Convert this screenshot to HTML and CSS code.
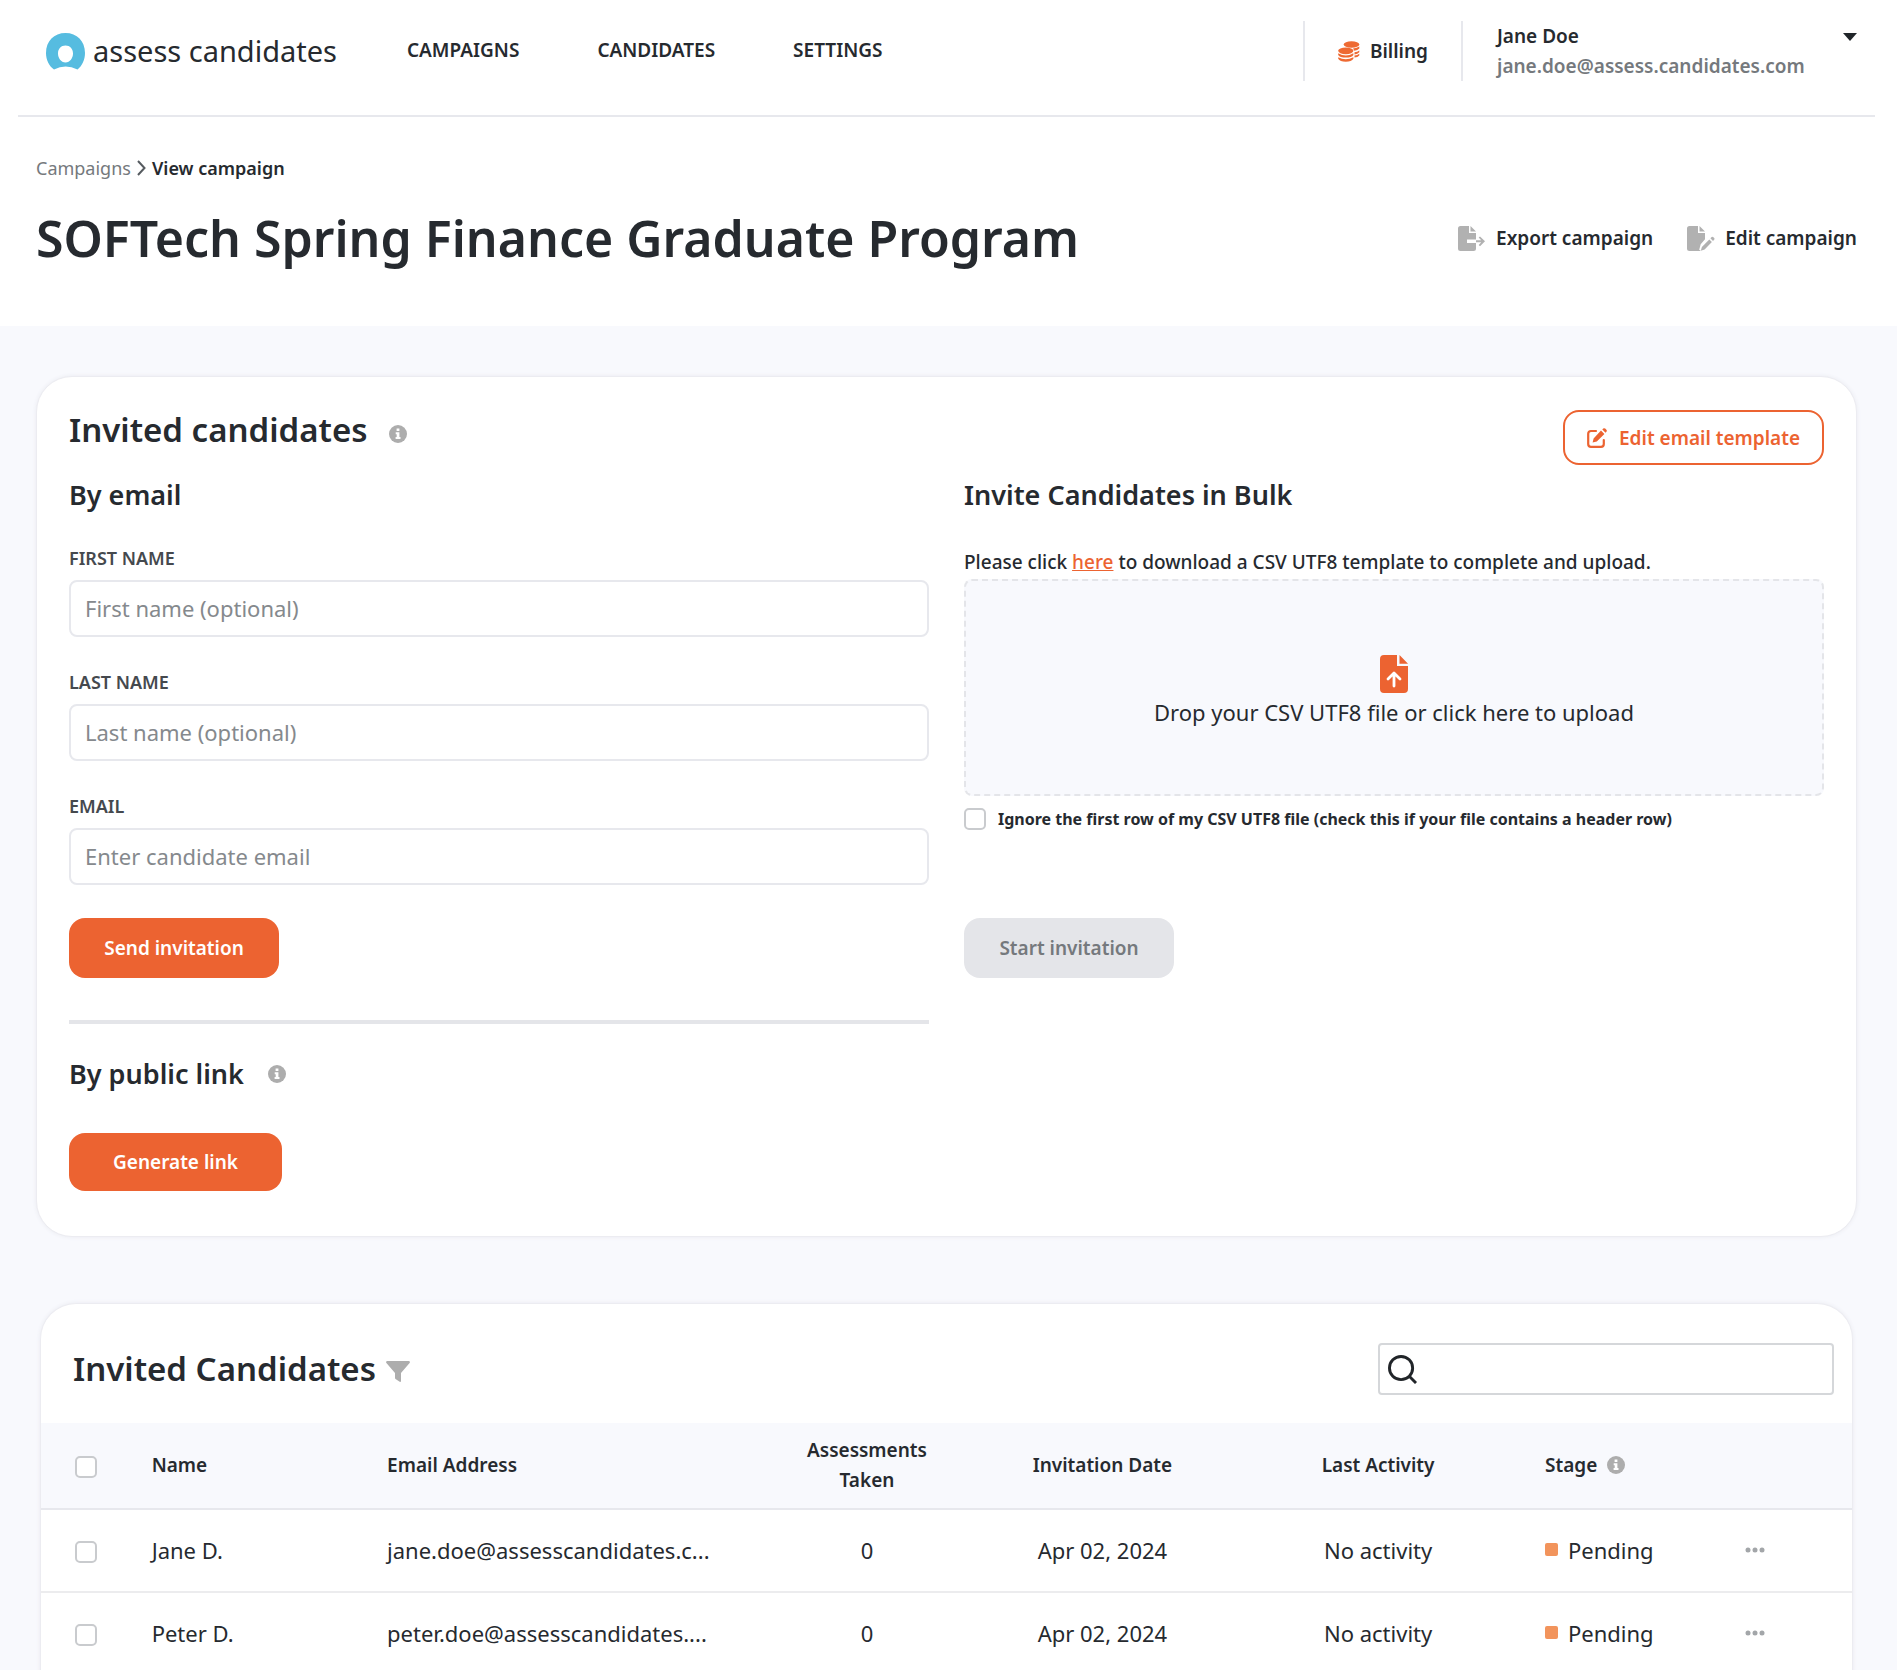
FILE: index.html
```html
<!DOCTYPE html>
<html lang="en">
<head>
<meta charset="utf-8">
<meta name="viewport" content="width=device-width, initial-scale=1">
<title>View campaign - assess candidates</title>
<link rel="stylesheet" href="styles.css">
</head>
<body>
<svg class="sprite" aria-hidden="true">
  <symbol id="info" viewBox="0 0 18 18">
    <circle cx="9" cy="9" r="9" fill="#adadad"/>
    <path d="M7.600 3.500h2.800v2.600H7.600zM6.700 7.300h3.700v4.700h1.100v1.900H6.600V12h1.100V9.200h-1z" fill="#fff"/>
  </symbol>
</svg>

<header class="topbar">
  <a class="logo" href="#">
    <svg width="39" height="37" viewBox="0 0 39 37" aria-hidden="true">
      <path fill="#56bce0" fill-rule="evenodd" d="M8 36.500C3 33 0 27 0 20C0 8 8 0 19.500 0S39 8 39 20C39 27 36 33 31.500 36.500Q19.500 30.500 8 36.500ZM19.500 12.500C15 12.500 12 16 12 20.500S15 29.500 19.500 29.500S27 25 27 20.500S24 12.500 19.500 12.500Z"/>
    </svg>
    <span>assess candidates</span>
  </a>
  <nav class="nav" aria-label="Main">
    <a href="#">CAMPAIGNS</a>
    <a href="#">CANDIDATES</a>
    <a href="#">SETTINGS</a>
  </nav>
  <a class="billing" href="#">
    <svg width="22" height="21" viewBox="0 0 22 21" aria-hidden="true" fill="#ee6a33">
      <ellipse cx="13.500" cy="3.500" rx="7.800" ry="3.200"/>
      <path d="M15 7.600q4-.3 6.300-2v1.800q-1.600 2-5 2.300zM16.500 11.200q3-.4 4.800-1.800v1.800q-1.600 1.800-4.800 2.200zM16.500 14.600q3-.4 4.800-1.800v1.600q-1.600 1.800-4.800 2.200z"/>
      <ellipse cx="7.800" cy="9.800" rx="7.600" ry="3.400"/>
      <path d="M.2 12.200q7.600 4.400 15.200 0v1.700q-1.800 2.600-7.600 2.600T.2 13.900zM.2 16.200q7.600 4 15.200 0v1.600q-1.800 2.900-7.600 2.900T.2 17.800z"/>
    </svg>
    Billing
  </a>
  <button class="user" type="button">
    <span class="user-text">
      <span>Jane Doe</span>
      <span class="user-email">jane.doe@assess.candidates.com</span>
    </span>
    <svg width="14" height="8" viewBox="0 0 14 8" aria-hidden="true"><path d="M0 0h14L7 8z" fill="#212529"/></svg>
  </button>
</header>

<section class="intro">
  <nav class="crumbs" aria-label="Breadcrumb">
    <a href="#">Campaigns</a>
    <svg width="9" height="16" viewBox="0 0 9 16" aria-hidden="true"><path d="M1 1l6.500 7L1 15" fill="none" stroke="#565b60" stroke-width="2"/></svg>
    <strong>View campaign</strong>
  </nav>
  <div class="intro-row">
    <h1>SOFTech Spring Finance Graduate Program</h1>
    <div class="actions">
      <button class="action" type="button">
        <svg width="28" height="25" viewBox="0 0 28 25" aria-hidden="true" fill="#b1b1b1">
          <path d="M2.500 0H11v7h7v6.500H9v3.600h9v5.400a2.500 2.500 0 0 1-2.500 2.500h-13A2.500 2.500 0 0 1 0 22.500v-20A2.500 2.500 0 0 1 2.500 0z"/>
          <path d="M12.500 0l5.500 5.600h-5.500z"/>
          <path d="M18 14.300h5.200l-2.500-2.700 1.300-1.200 5 4.900-5 5-1.300-1.200 2.500-2.800H18z"/>
        </svg>
        Export campaign
      </button>
      <button class="action" type="button">
        <svg width="28" height="25" viewBox="0 0 28 25" aria-hidden="true" fill="#b1b1b1">
          <path d="M2.500 0H11v7h7v6.200l-4.300 5-1.500 5.600 1.700 1.200H2.500A2.500 2.500 0 0 1 0 22.500v-20A2.500 2.500 0 0 1 2.500 0z"/>
          <path d="M12.500 0l5.500 5.600h-5.500z"/>
          <path d="M22.300 13.500l2.600 2.500-7.300 7.600-3.800 1.200 1.100-3.700zM23.400 12.300l1.300-1.200q.8-.6 1.700.2l.8.800q.7.800 0 1.600l-1.200 1.200z"/>
        </svg>
        Edit campaign
      </button>
    </div>
  </div>
</section>

<main class="main">
  <section class="card invite">
    <div class="invite-head">
      <h2>Invited candidates <svg class="info" role="img" aria-label="Information"><use href="#info"/></svg></h2>
      <button class="btn-outline" type="button">
        <svg width="20" height="20" viewBox="0 0 20 20" aria-hidden="true">
          <path d="M9 3H4Q1.200 3 1.200 5.800V16Q1.200 18.800 4 18.800H14Q16.800 18.800 16.800 16V12" fill="none" stroke="#ec6331" stroke-width="2.200" stroke-linecap="round"/>
          <path d="M14 2.600l3.400 3.400-7.600 7.600-4.200 1 1-4.200zM15.300 1.500l.9-.9q1-.9 2 0l1.200 1.200q.9 1 0 2L18.500 4.700z" fill="#ec6331"/>
        </svg>
        Edit email template
      </button>
    </div>
    <div class="columns">
      <div>
        <form>
          <h3>By email</h3>
          <div class="field">
            <label for="first">FIRST NAME</label>
            <input id="first" type="text" placeholder="First name (optional)">
          </div>
          <div class="field">
            <label for="last">LAST NAME</label>
            <input id="last" type="text" placeholder="Last name (optional)">
          </div>
          <div class="field">
            <label for="email">EMAIL</label>
            <input id="email" type="email" placeholder="Enter candidate email">
          </div>
          <button class="btn" type="button">Send invitation</button>
        </form>
        <hr class="rule">
        <h3 class="link-title">By public link <svg class="info" role="img" aria-label="Information"><use href="#info"/></svg></h3>
        <button class="btn btn-link" type="button">Generate link</button>
      </div>
      <form>
        <h3>Invite Candidates in Bulk</h3>
        <p class="hint">Please click <a href="#">here</a> to download a CSV UTF8 template to complete and upload.</p>
        <button class="drop" type="button">
          <svg width="28" height="38" viewBox="0 0 28 38" aria-hidden="true">
            <path d="M4 0H17V11H28V34a4 4 0 0 1-4 4H4a4 4 0 0 1-4-4V4A4 4 0 0 1 4 0zM19.500 0L28 8.800H19.500z" fill="#ec6331"/>
            <path d="M14 31V19M8 24l6-6 6 6" fill="none" stroke="#fff" stroke-width="2.800" stroke-linecap="round" stroke-linejoin="round"/>
          </svg>
          Drop your CSV UTF8 file or click here to upload
        </button>
        <label class="check"><input type="checkbox"> Ignore the first row of my CSV UTF8 file (check this if your file contains a header row)</label>
        <button class="btn btn-muted" type="button" disabled>Start invitation</button>
      </form>
    </div>
  </section>

  <section class="card list">
    <div class="list-head">
      <h2>Invited Candidates <svg class="filter" width="24" height="21" viewBox="0 0 24 21" role="img" aria-label="Filter"><path d="M1 0h22q1.500.6.600 2L15 12v8.200q-.3 1-1.300.6L9.500 18q-.5-.4-.5-1v-5L.4 2Q-.5.600 1 0z" fill="#adadad"/></svg></h2>
      <div class="search">
        <svg width="29" height="29" viewBox="0 0 30 30" aria-hidden="true" fill="none" stroke="#212529" stroke-width="3"><circle cx="13.500" cy="13.500" r="12"/><path d="M22 22l7 7"/></svg>
        <input type="search" aria-label="Search candidates">
      </div>
    </div>
    <table>
      <thead>
        <tr>
          <th class="c-check"><input type="checkbox" aria-label="Select all"></th>
          <th class="c-name">Name</th>
          <th class="c-email">Email Address</th>
          <th class="c-count">Assessments<br>Taken</th>
          <th class="c-date">Invitation Date</th>
          <th class="c-activity">Last Activity</th>
          <th class="c-stage"><span class="stage">Stage <svg class="info" role="img" aria-label="Information"><use href="#info"/></svg></span></th>
          <th class="c-more"></th>
        </tr>
      </thead>
      <tbody>
        <tr>
          <td class="c-check"><input type="checkbox" aria-label="Select Jane D."></td>
          <td>Jane D.</td>
          <td>jane.doe@assesscandidates.c...</td>
          <td class="c-count">0</td>
          <td class="c-date">Apr 02, 2024</td>
          <td class="c-activity">No activity</td>
          <td class="c-stage"><span class="stage pending">Pending</span></td>
          <td><button class="more" type="button" aria-label="More actions"><svg width="20" height="6" viewBox="0 0 20 6" fill="#a3a6a9"><circle cx="3" cy="3" r="2.500"/><circle cx="10" cy="3" r="2.500"/><circle cx="17" cy="3" r="2.500"/></svg></button></td>
        </tr>
        <tr>
          <td class="c-check"><input type="checkbox" aria-label="Select Peter D."></td>
          <td>Peter D.</td>
          <td>peter.doe@assesscandidates....</td>
          <td class="c-count">0</td>
          <td class="c-date">Apr 02, 2024</td>
          <td class="c-activity">No activity</td>
          <td class="c-stage"><span class="stage pending">Pending</span></td>
          <td><button class="more" type="button" aria-label="More actions"><svg width="20" height="6" viewBox="0 0 20 6" fill="#a3a6a9"><circle cx="3" cy="3" r="2.500"/><circle cx="10" cy="3" r="2.500"/><circle cx="17" cy="3" r="2.500"/></svg></button></td>
        </tr>
      </tbody>
    </table>
  </section>
</main>
</body>
</html>
```
FILE: styles.css
```css
* { box-sizing: border-box; }
body {
  margin: 0;
  background: #fff;
  color: #262a2f;
  font-family: "Noto Sans", "Open Sans", sans-serif;
  font-size: 22px;
}
h1, h2, h3, p { margin: 0; }
h1, h2, h3 { font-weight: 600; }
a { color: inherit; text-decoration: none; }
button, input { font: inherit; color: inherit; }
button { border: 0; padding: 0; background: none; cursor: pointer; }
svg { display: block; flex: none; }
.sprite { display: none; }
.info { width: 18px; height: 18px; }

/* top bar */
.topbar {
  display: flex;
  align-items: center;
  margin: 0 22px 0 18px;
  padding: 21px 18px 34px 28px;
  border-bottom: 2px solid #e7e8ed;
  font-size: 19px;
  font-weight: 600;
}
.logo { display: flex; align-items: center; gap: 8px; font-size: 29px; font-weight: 400; line-height: 36px; }
.nav { display: flex; gap: 78px; margin-left: 70px; padding-bottom: 2px; }
.billing {
  display: flex;
  align-items: center;
  gap: 10px;
  height: 60px;
  margin-left: auto;
  padding: 0 33px;
  border: solid #e7e8ed;
  border-width: 0 2px;
}
.user { display: flex; align-items: flex-start; gap: 33px; padding-left: 34px; font-weight: 600; text-align: left; }
.user svg { margin-top: 12px; }
.user-text { display: flex; flex-direction: column; min-width: 313px; line-height: 30px; }
.user-email { color: #75797d; }

/* title area */
.intro { padding: 39px 40px 58px 36px; }
.crumbs { display: flex; align-items: center; gap: 6px; font-size: 18px; line-height: 24px; }
.crumbs a { color: #75797d; }
.crumbs strong { font-weight: 600; }
.intro-row { display: flex; align-items: center; justify-content: space-between; margin-top: 28px; }
h1 { font-size: 50px; line-height: 60px; }
.actions { display: flex; gap: 34px; }
.action { display: flex; align-items: center; gap: 10px; font-size: 19px; font-weight: 600; }

/* cards */
.main { padding: 50px 40px 0 36px; background: #f8f9fd; }
.card { border: 1px solid #ececf1; border-radius: 36px; background: #fff; box-shadow: 0 0 4px #e9eaf0; }
h2 { display: flex; align-items: center; font-size: 33px; line-height: 40px; }
h3 { font-size: 27px; line-height: 36px; }
.invite { padding: 33px 32px 45px; }
.invite-head { display: flex; align-items: flex-start; justify-content: space-between; margin-bottom: 12px; }
.invite-head h2 { gap: 22px; }
.invite-head .info { margin-top: 8px; }
.columns { display: grid; grid-template-columns: 1fr 1fr; gap: 35px; }
.btn-outline {
  display: flex;
  align-items: center;
  justify-content: center;
  gap: 12px;
  height: 55px;
  padding: 0 22px;
  border: 2px solid #ec6331;
  border-radius: 16px;
  color: #ec6331;
  font-size: 19px;
  font-weight: 600;
}
.field { display: flex; flex-direction: column; gap: 10px; margin: 33px 0; }
.field label { color: #45494e; font-size: 18px; font-weight: 600; line-height: 24px; }
.field input { width: 100%; height: 57px; padding: 0 14px 2px; border: 2px solid #e7e8ed; border-radius: 8px; background: #fff; }
.field input::placeholder { color: #85898d; opacity: 1; }
.btn { display: block; width: 210px; height: 60px; border-radius: 16px; background: #ec6331; color: #fff; font-size: 19px; font-weight: 600; }
.btn-link { width: 213px; height: 58px; }
.btn-muted { margin-top: 88px; background: #e4e5e9; color: #75797d; }
.rule { height: 4px; margin: 42px 0 32px; border: 0; background: #e4e5e9; }
.link-title { display: flex; align-items: center; gap: 24px; margin-bottom: 41px; }
.hint { margin: 35px 0 3px; font-size: 19px; font-weight: 500; line-height: 28px; }
.hint a { color: #ec6331; text-decoration: underline; }
.drop {
  display: flex;
  flex-direction: column;
  align-items: center;
  justify-content: center;
  gap: 4px;
  width: 100%;
  height: 217px;
  padding-top: 6px;
  border: 2px dashed #e4e5e9;
  border-radius: 8px;
  background: #f8f9fd;
}
.check { display: flex; align-items: center; gap: 12px; margin-top: 12px; font-size: 16px; font-weight: 700; line-height: 21px; }
input[type="checkbox"] {
  appearance: none;
  display: block;
  flex: none;
  width: 22px;
  height: 22px;
  margin: 0;
  border: 2px solid #c9cbce;
  border-radius: 5px;
  background: #fff;
}

/* candidate list */
.list { margin: 66px 4px 0; overflow: hidden; border-bottom: 0; border-radius: 36px 36px 0 0; }
.list-head { display: flex; align-items: center; justify-content: space-between; padding: 39px 18px 28px 32px; }
.list-head h2 { gap: 10px; }
.filter { margin-top: 4px; }
.search { display: flex; align-items: center; gap: 10px; width: 456px; height: 52px; padding: 0 8px; border: 2px solid #d5d7da; border-radius: 4px; }
.search input { flex: 1; min-width: 0; border: 0; outline: 0; background: none; }
table { width: 100%; table-layout: fixed; border-collapse: collapse; }
th { height: 86px; padding: 0 0 2px 2px; background: #f8f9fd; border-bottom: 2px solid #e7e8ed; font-size: 19px; font-weight: 600; line-height: 30px; text-align: left; }
td { height: 83px; padding: 0 0 2px 2px; border-bottom: 2px solid #ececee; white-space: nowrap; }
th.c-check, td.c-check { width: 6%; padding: 2px 0 0 34px; }
.c-name { width: 13%; }
.c-email { width: 21%; }
.c-more { width: 6%; }
th.c-count, td.c-count { width: 11%; padding-left: 4px; text-align: center; }
th.c-date, td.c-date { width: 15%; padding-left: 4px; text-align: center; }
th.c-activity, td.c-activity { width: 16%; padding: 0 6px 2px 0; text-align: center; }
th.c-stage, td.c-stage { width: 12%; padding-left: 19px; }
.stage { display: flex; align-items: center; gap: 10px; }
.pending::before { content: ""; width: 13px; height: 13px; border-radius: 2px; background: #f2945c; }
.more { display: block; padding: 8px 0; }
```
